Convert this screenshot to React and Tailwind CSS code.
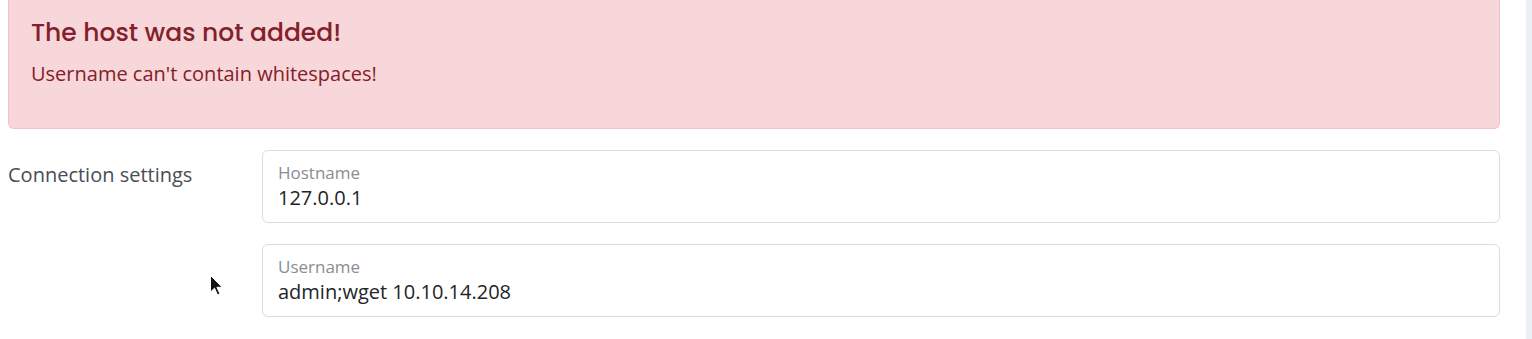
import { useState } from 'react'

function Cursor() {
  return (
    <svg
      className="absolute left-[209px] top-[274px]"
      width="16"
      height="24"
      viewBox="0 0 16 24"
    >
      <path
        d="M1.5 1.5 L1.5 18 L5.5 14.2 L8.6 21 L11 20 L7.9 13.3 L13.2 13.3 Z"
        fill="#111"
        stroke="#fff"
        strokeWidth="1"
        strokeLinejoin="round"
      />
    </svg>
  )
}

function FloatingField({ label, value }) {
  return (
    <div className="w-full h-[73px] rounded-[6px] border border-[#d9dce3] bg-white px-[15px] pt-[11px]">
      <div className="text-[17px] leading-[22px] text-[#8a8d92]">{label}</div>
      <div className="mt-px text-[20px] leading-[26px] text-[#212529]">{value}</div>
    </div>
  )
}

export default function App() {
  const [hostname] = useState('127.0.0.1')
  const [username] = useState('admin;wget 10.10.14.208')

  return (
    <div className="relative flex h-[339px] w-full bg-white font-['Open_Sans',sans-serif] overflow-hidden">
      <div className="flex-1 pl-2 pr-[26px]">
        <div className="h-[129px] rounded-b-[6px] border border-t-0 border-[#f5c2c7] bg-[#f8d7da] px-[22px] pt-[17px]">
          <h4 className="font-['Poppins','Inter',sans-serif] text-[25px] font-medium leading-[32px] text-[#842029]">
            The host was not added!
          </h4>
          <p className="mt-[12px] text-[20px] leading-[26px] text-[#842029]">
            Username can't contain whitespaces!
          </p>
        </div>

        <div className="mt-[21px] flex">
          <div className="w-[254px] shrink-0 pt-[12px] text-[20px] leading-[26px] text-[#4a4d52]">
            Connection settings
          </div>
          <div className="flex flex-1 flex-col gap-[21px]">
            <FloatingField label="Hostname" value={hostname} />
            <FloatingField label="Username" value={username} />
          </div>
        </div>
      </div>
      <div className="w-[6px] shrink-0 bg-[#eceef8]" />
      <Cursor />
    </div>
  )
}
